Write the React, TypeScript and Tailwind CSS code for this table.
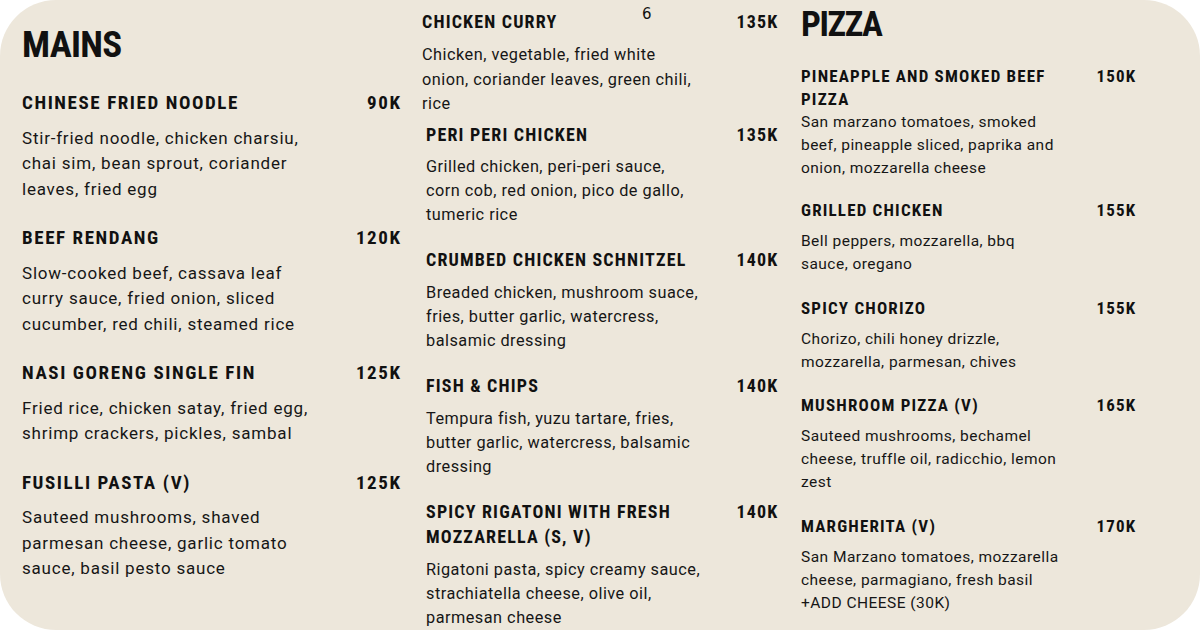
import React from "react";

type Item = { title: string[]; price: string; desc: string[] };

const col1: Item[] = [
  { title: ["CHINESE FRIED NOODLE"], price: "90K", desc: ["Stir-fried noodle, chicken charsiu,", "chai sim, bean sprout, coriander", "leaves, fried egg"] },
  { title: ["BEEF RENDANG"], price: "120K", desc: ["Slow-cooked beef, cassava leaf", "curry sauce, fried onion, sliced", "cucumber, red chili, steamed rice"] },
  { title: ["NASI GORENG SINGLE FIN"], price: "125K", desc: ["Fried rice, chicken satay, fried egg,", "shrimp crackers, pickles, sambal"] },
  { title: ["FUSILLI PASTA (V)"], price: "125K", desc: ["Sauteed mushrooms, shaved", "parmesan cheese, garlic tomato", "sauce, basil pesto sauce"] },
];

const col2: Item[] = [
  { title: ["PERI PERI CHICKEN"], price: "135K", desc: ["Grilled chicken, peri-peri sauce,", "corn cob, red onion, pico de gallo,", "tumeric rice"] },
  { title: ["CRUMBED CHICKEN SCHNITZEL"], price: "140K", desc: ["Breaded chicken, mushroom suace,", "fries, butter garlic, watercress,", "balsamic dressing"] },
  { title: ["FISH & CHIPS"], price: "140K", desc: ["Tempura fish, yuzu tartare, fries,", "butter garlic, watercress, balsamic", "dressing"] },
  { title: ["SPICY RIGATONI WITH FRESH", "MOZZARELLA (S, V)"], price: "140K", desc: ["Rigatoni pasta, spicy creamy sauce,", "strachiatella cheese, olive oil,", "parmesan cheese"] },
];

const col3: Item[] = [
  { title: ["GRILLED CHICKEN"], price: "155K", desc: ["Bell peppers, mozzarella, bbq", "sauce, oregano"] },
  { title: ["SPICY CHORIZO"], price: "155K", desc: ["Chorizo, chili honey drizzle,", "mozzarella, parmesan, chives"] },
  { title: ["MUSHROOM PIZZA (V)"], price: "165K", desc: ["Sauteed mushrooms, bechamel", "cheese, truffle oil, radicchio, lemon", "zest"] },
  { title: ["MARGHERITA (V)"], price: "170K", desc: ["San Marzano tomatoes, mozzarella", "cheese, parmagiano, fresh basil", "+ADD CHEESE (30K)"] },
];

const HEAD = "[font-family:'Roboto_Condensed','Liberation_Sans_Narrow','DejaVu_Sans_Condensed',sans-serif] [font-stretch:condensed]";

function Title({ lines, price, cls }: { lines: string[]; price: string; cls: string }) {
  return (
    <div className={`flex justify-between items-start font-bold text-[#111] ${HEAD} ${cls}`}>
      <div>
        {lines.map((l) => (
          <div key={l}>{l}</div>
        ))}
      </div>
      <div className="mr-[-0.08em]">{price}</div>
    </div>
  );
}

function Desc({ lines, cls }: { lines: string[]; cls: string }) {
  return (
    <div className={`text-[#161616] font-['Roboto',sans-serif] ${cls}`}>
      {lines.map((l) => (
        <div key={l} className="whitespace-nowrap">{l}</div>
      ))}
    </div>
  );
}

export default function App() {
  return (
    <div className="w-[1200px] h-[630px] bg-white">
      <div className="relative w-full h-full rounded-[56px] bg-[#ede7db] flex overflow-hidden">
        <div className="absolute left-[642px] top-[3px] text-[15px] text-[#111] font-['DejaVu_Sans',sans-serif]">6</div>

        {/* Column 1 */}
        <div className="w-[400px] pl-[22px] pt-[23px] flex flex-col">
          <div className={`text-[37px] leading-[44px] font-bold tracking-[-0.02em] text-[#111] ${HEAD}`}>MAINS</div>
          <div className="mt-[24px] flex flex-col gap-[24px]">
            {col1.map((it) => (
              <div key={it.title[0]}>
                <Title lines={it.title} price={it.price} cls="text-[19px] leading-[24px] tracking-[0.083em]" />
                <Desc lines={it.desc} cls="mt-[10.5px] text-[17px] leading-[25.5px] tracking-[0.046em]" />
              </div>
            ))}
          </div>
        </div>

        {/* Column 2 */}
        <div className="w-[377px] pl-[22px] pt-[10px] flex flex-col">
          <div>
            <Title lines={["CHICKEN CURRY"]} price="135K" cls="text-[18px] leading-[24px] tracking-[0.065em]" />
            <Desc lines={["Chicken, vegetable, fried white", "onion, coriander leaves, green chili,", "rice"]} cls="mt-[9px] text-[16.3px] leading-[24.5px] tracking-[0.03em]" />
          </div>
          <div className="ml-[4px] mt-[5px] flex flex-col gap-[20.75px]">
            {col2.map((it) => (
              <div key={it.title[0]}>
                <Title lines={it.title} price={it.price} cls="text-[18px] leading-[25px] tracking-[0.065em]" />
                <Desc lines={it.desc} cls="mt-[8.75px] text-[16.3px] leading-[23.8px] tracking-[0.03em]" />
              </div>
            ))}
          </div>
        </div>

        {/* Column 3 */}
        <div className="w-[358px] pl-[24px] pt-[4px] flex flex-col">
          <div className={`text-[35px] leading-[41px] font-bold tracking-[-0.04em] text-[#111] ${HEAD}`}>PIZZA</div>
          <div className="mt-[20px]">
            <Title lines={["PINEAPPLE AND SMOKED BEEF", "PIZZA"]} price="150K" cls="text-[17px] leading-[23px] tracking-[0.07em]" />
            <Desc lines={["San marzano tomatoes, smoked", "beef, pineapple sliced, paprika and", "onion, mozzarella cheese"]} cls="text-[15.5px] leading-[23px] tracking-[0.03em]" />
          </div>
          <div className="mt-[19px] flex flex-col gap-[20.5px]">
            {col3.map((it) => (
              <div key={it.title[0]}>
                <Title lines={it.title} price={it.price} cls="text-[17px] leading-[23px] tracking-[0.07em]" />
                <Desc lines={it.desc} cls="mt-[8px] text-[15.5px] leading-[23px] tracking-[0.03em]" />
              </div>
            ))}
          </div>
        </div>
      </div>
    </div>
  );
}
